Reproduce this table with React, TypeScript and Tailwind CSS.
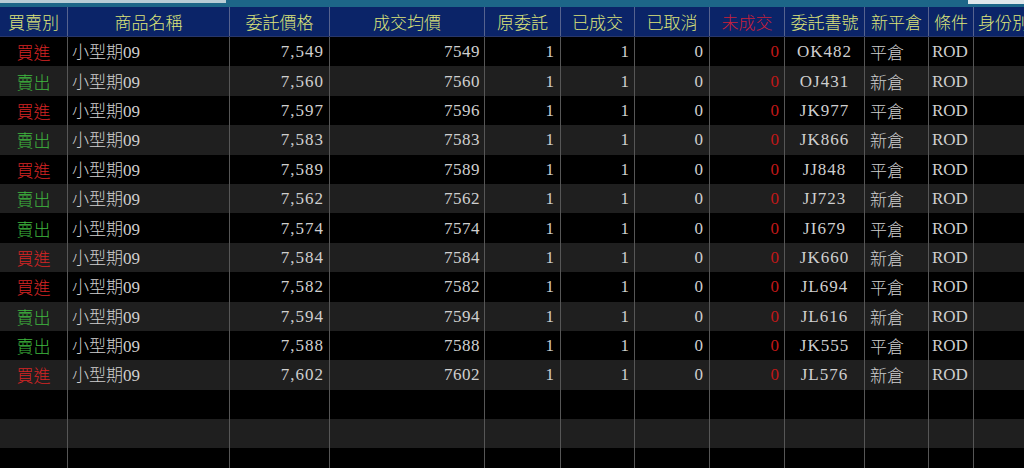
import React from 'react';

// column widths + alignment, in order of the header
const cols = [
    { title: '買賣別', w: 'w-[68px]', align: 'justify-center' },
    { title: '商品名稱', w: 'w-[162px]', align: 'justify-start pl-[4px]' },
    { title: '委託價格', w: 'w-[100px]', align: 'justify-end pr-[5px]' },
    { title: '成交均價', w: 'w-[155px]', align: 'justify-end pr-[4px]' },
    { title: '原委託', w: 'w-[76px]', align: 'justify-end pr-[6px]' },
    { title: '已成交', w: 'w-[74px]', align: 'justify-end pr-[5px]' },
    { title: '已取消', w: 'w-[75px]', align: 'justify-end pr-[6px]' },
    { title: '未成交', w: 'w-[75px]', align: 'justify-end pr-[5px]' },
    { title: '委託書號', w: 'w-[80px]', align: 'justify-center' },
    { title: '新平倉', w: 'w-[64px]', align: 'justify-start pl-[5px]' },
    { title: '條件', w: 'w-[45px]', align: 'justify-start pl-[3px]' },
    { title: '身份別', w: 'w-[70px]', align: 'justify-start pl-[4px]' },
];

const orders = [
    ['買進', '7,549', '7549', 'OK482', '平倉'],
    ['賣出', '7,560', '7560', 'OJ431', '新倉'],
    ['買進', '7,597', '7596', 'JK977', '平倉'],
    ['賣出', '7,583', '7583', 'JK866', '新倉'],
    ['買進', '7,589', '7589', 'JJ848', '平倉'],
    ['賣出', '7,562', '7562', 'JJ723', '新倉'],
    ['賣出', '7,574', '7574', 'JI679', '平倉'],
    ['買進', '7,584', '7584', 'JK660', '新倉'],
    ['買進', '7,582', '7582', 'JL694', '平倉'],
    ['賣出', '7,594', '7594', 'JL616', '新倉'],
    ['賣出', '7,588', '7588', 'JK555', '平倉'],
    ['買進', '7,602', '7602', 'JL576', '新倉'],
];

const cjk = { fontFamily: '"Noto Sans CJK TC", sans-serif' };

function Row({ cells, odd }: { cells: React.ReactNode[]; odd: boolean }) {
    return (
        <div className={`flex h-[29.4px] shrink-0 ${odd ? 'bg-[#1f1f1f]' : 'bg-black'}`}>
            {cols.map((c, i) => (
                <div
                    key={i}
                    className={`${c.w} shrink-0 h-full flex items-center ${c.align} border-r border-[#565656] whitespace-nowrap overflow-hidden`}
                >
                    {cells[i]}
                </div>
            ))}
        </div>
    );
}

export default function App() {
    const empty = Array(cols.length).fill('');

    return (
        <div
            className="w-[1024px] h-[468px] overflow-hidden bg-black text-[#cfcfcf] text-[17px] leading-none flex flex-col"
            style={{ fontFamily: '"Liberation Serif", "Noto Sans CJK TC", serif' }}
        >
            {/* window strip above the grid */}
            <div className="h-[7px] shrink-0 flex bg-[#1d6688]">
                <div className="w-[226px] h-[3px] bg-[#b9cdd6]" />
                <div className="flex-1" />
                <div className="w-[56px] h-[4px] bg-[#dfe6ea]" />
            </div>

            {/* header */}
            <div className="flex h-[30px] shrink-0 bg-[#0b2468] border-b border-[#27366a] text-[#dde47a] font-light">
                {cols.map((c, i) => (
                    <div
                        key={i}
                        className={`${c.w} shrink-0 h-full flex items-center ${i === 11 ? 'justify-start pl-[4px]' : 'justify-center'} border-r border-[#56638f] whitespace-nowrap overflow-hidden ${i === 7 ? 'text-[#c8203a]' : ''}`}
                        style={cjk}
                    >
                        {c.title}
                    </div>
                ))}
            </div>

            {orders.map((o, idx) => {
                const buy = o[0] === '買進';
                const cells = [
                    <span className={`font-light ${buy ? 'text-[#d42424]' : 'text-[#3fb93f]'}`} style={cjk}>{o[0]}</span>,
                    <span className="font-light" style={cjk}>小型期<span style={{ fontFamily: '"Liberation Serif", serif' }}>09</span></span>,
                    <span className="tracking-[1px]">{o[1]}</span>,
                    <span className="tracking-[0.5px]">{o[2]}</span>,
                    '1',
                    '1',
                    '0',
                    <span className="text-[#c01818]">0</span>,
                    <span className="tracking-[1px]">{o[3]}</span>,
                    <span className="font-light" style={cjk}>{o[4]}</span>,
                    'ROD',
                    '',
                ];
                return <Row key={idx} cells={cells} odd={idx % 2 === 1} />;
            })}

            <Row cells={empty} odd={false} />
            <Row cells={empty} odd={true} />
            <Row cells={empty} odd={false} />
        </div>
    );
}
